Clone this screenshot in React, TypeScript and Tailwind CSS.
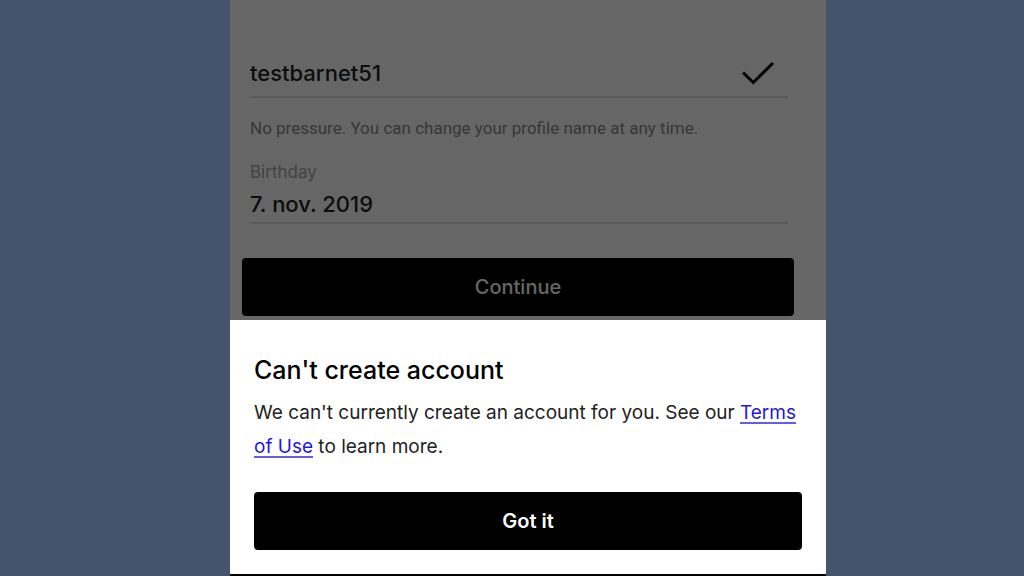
import { useState } from "react";

export default function App() {
  const [profileName, setProfileName] = useState("testbarnet51");
  const [birthday, setBirthday] = useState("7. nov. 2019");

  return (
    <div className="min-h-screen bg-[#44546a] pl-8 font-['Inter',sans-serif]">
      <main className="mx-auto flex min-h-screen w-full max-w-[596px] flex-col bg-white text-[#222222]">
        {/* Sign up form, dimmed behind the sheet */}
        <form
          className="relative flex grow flex-col justify-end px-3 pb-1"
          onSubmit={(e) => e.preventDefault()}
        >
          <div className="mr-[26px] ml-2 flex h-12 items-center justify-between border-b-2 border-[#e2e2e2]">
            <input
              type="text"
              aria-label="Profile name"
              className="min-w-0 grow text-[22px] font-medium outline-none"
              value={profileName}
              onChange={(e) => setProfileName(e.target.value)}
            />
            <svg
              className="mr-3.5 h-6 w-8 shrink-0 text-black"
              viewBox="0 0 32 24"
              fill="none"
              stroke="currentColor"
              strokeWidth="3"
            >
              <path d="M1 11.5 11.3 21.5 31 2" />
            </svg>
          </div>
          <p className="mt-4 ml-2 font-['Roboto',sans-serif] text-[17px] leading-7 text-[#8a8a8a]">
            No pressure. You can change your profile name at any time.
          </p>

          <div className="mt-4 mr-[26px] ml-2 flex flex-col border-b-2 border-[#e2e2e2]">
            <label htmlFor="birthday" className="text-[17px] leading-7 text-[#a5a5a5]">
              Birthday
            </label>
            <input
              id="birthday"
              type="text"
              className="h-9 w-full text-[22px] font-medium outline-none"
              value={birthday}
              onChange={(e) => setBirthday(e.target.value)}
            />
          </div>

          <button
            type="submit"
            className="mt-[34px] mr-5 h-[58px] rounded-sm bg-black text-xl font-medium text-white"
          >
            Continue
          </button>
          <div className="absolute inset-0 bg-black/60" />
        </form>

        {/* Bottom sheet */}
        <section
          role="dialog"
          aria-labelledby="sheet-title"
          className="border-b-2 border-black bg-white px-6 pt-8 pb-6"
        >
          <h2 id="sheet-title" className="text-[25px] leading-9 font-medium text-black">
            Can't create account
          </h2>
          <p className="mt-2 text-[19px] leading-[34px]">
            We can't currently create an account for you. See our{" "}
            <a
              href="#terms"
              className="text-[#2318d8] underline decoration-[#2318d8]/70 decoration-2 underline-offset-3"
            >
              Terms of Use
            </a>{" "}
            to learn more.
          </p>
          <button
            type="button"
            className="mt-7 h-[58px] w-full rounded-sm bg-black text-xl font-semibold text-white"
          >
            Got it
          </button>
        </section>
      </main>
    </div>
  );
}
